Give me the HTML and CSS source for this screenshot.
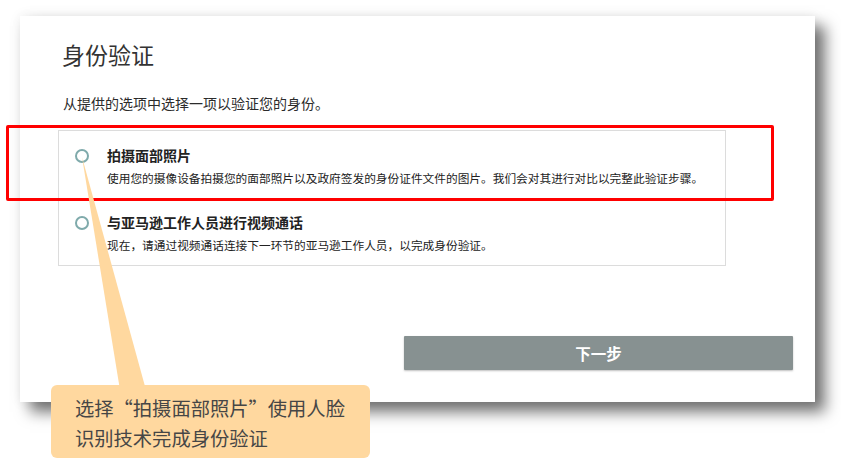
FILE: index.html
```html
<!DOCTYPE html>
<html lang="zh-CN">
<head>
<meta charset="utf-8">
<title>身份验证</title>
<link rel="stylesheet" href="styles.css">
</head>
<body>
<div class="stage">
  <div class="card">
    <h1 class="title">身份验证</h1>
    <p class="subtitle">从提供的选项中选择一项以验证您的身份。</p>
    <div class="options">
      <div class="option">
        <span class="radio"></span>
        <div class="option-text">
          <div class="option-title">拍摄面部照片</div>
          <div class="option-desc">使用您的摄像设备拍摄您的面部照片以及政府签发的身份证件文件的图片。我们会对其进行对比以完整此验证步骤。</div>
        </div>
      </div>
      <div class="option">
        <span class="radio"></span>
        <div class="option-text">
          <div class="option-title">与亚马逊工作人员进行视频通话</div>
          <div class="option-desc">现在，请通过视频通话连接下一环节的亚马逊工作人员，以完成身份验证。</div>
        </div>
      </div>
    </div>
    <div class="actions">
      <button class="next-btn" type="button">下一步</button>
    </div>
  </div>

  <div class="highlight"></div>
  <svg class="pointer" width="841" height="475" viewBox="0 0 841 475" aria-hidden="true">
    <polygon points="82,157 120,390 146,390" fill="#FFD89F"/>
  </svg>
  <div class="callout">选择“拍摄面部照片”使用人脸<br>识别技术完成身份验证</div>
</div>
</body>
</html>
```

FILE: styles.css
```css
* { box-sizing: border-box; }

html, body {
  margin: 0;
  padding: 0;
  background: #ffffff;
}

body {
  font-family: "Noto Sans CJK SC", "Noto Sans", sans-serif;
  color: #2b2b2b;
  width: 841px;
  height: 475px;
  overflow: hidden;
}

.stage {
  position: relative;
  width: 841px;
  height: 475px;
  padding: 16px 0 0 20px;
}

.card {
  width: 795px;
  height: 386px;
  background: #ffffff;
  padding: 24px 22px 0 42px;
  box-shadow: 0 0 12px rgba(0, 0, 0, 0.07), 10px 10px 14px rgba(0, 0, 0, 0.55);
  display: flex;
  flex-direction: column;
}

.title {
  margin: 0;
  font-size: 23px;
  line-height: 28px;
  font-weight: 400;
  color: #333333;
}

.subtitle {
  margin: 25px 0 0 1px;
  font-size: 14px;
  line-height: 20px;
  color: #2b2b2b;
}

.options {
  margin: 17px 0 0 -4px;
  width: 668px;
  border: 1px solid #dcdcdc;
}

.option {
  display: flex;
  align-items: flex-start;
  padding: 14px 0 11px 16px;
}

.radio {
  flex: none;
  width: 14px;
  height: 14px;
  margin-top: 4px;
  border: 2px solid #7faaab;
  border-radius: 50%;
  background: #ffffff;
}

.option-text {
  margin-left: 18px;
}

.option-title {
  font-size: 14px;
  line-height: 20px;
  font-weight: 700;
  color: #222222;
}

.option-desc {
  margin-top: 4px;
  font-size: 11.7px;
  line-height: 18px;
  color: #222222;
}

.actions {
  display: flex;
  justify-content: flex-end;
  margin-top: 70px;
}

.next-btn {
  width: 389px;
  height: 34px;
  border: none;
  border-radius: 1px;
  background: #879191;
  color: #ffffff;
  font-family: "Noto Sans CJK SC", "Noto Sans", sans-serif;
  font-size: 15.5px;
  font-weight: 700;
  box-shadow: 0 1px 2px rgba(0, 0, 0, 0.25);
  padding: 0;
}

/* annotation overlays */
.highlight {
  position: absolute;
  left: 6px;
  top: 125px;
  width: 768px;
  height: 76px;
  border: 3px solid #ff0000;
  border-radius: 2px;
}

.pointer {
  position: absolute;
  left: 0;
  top: 0;
}

.callout {
  position: absolute;
  left: 51px;
  top: 385px;
  width: 319px;
  height: 73px;
  padding: 8px 0 0 24px;
  background: #FFD89F;
  border-radius: 6px;
  font-size: 19.3px;
  line-height: 30px;
  color: #464646;
}
```
